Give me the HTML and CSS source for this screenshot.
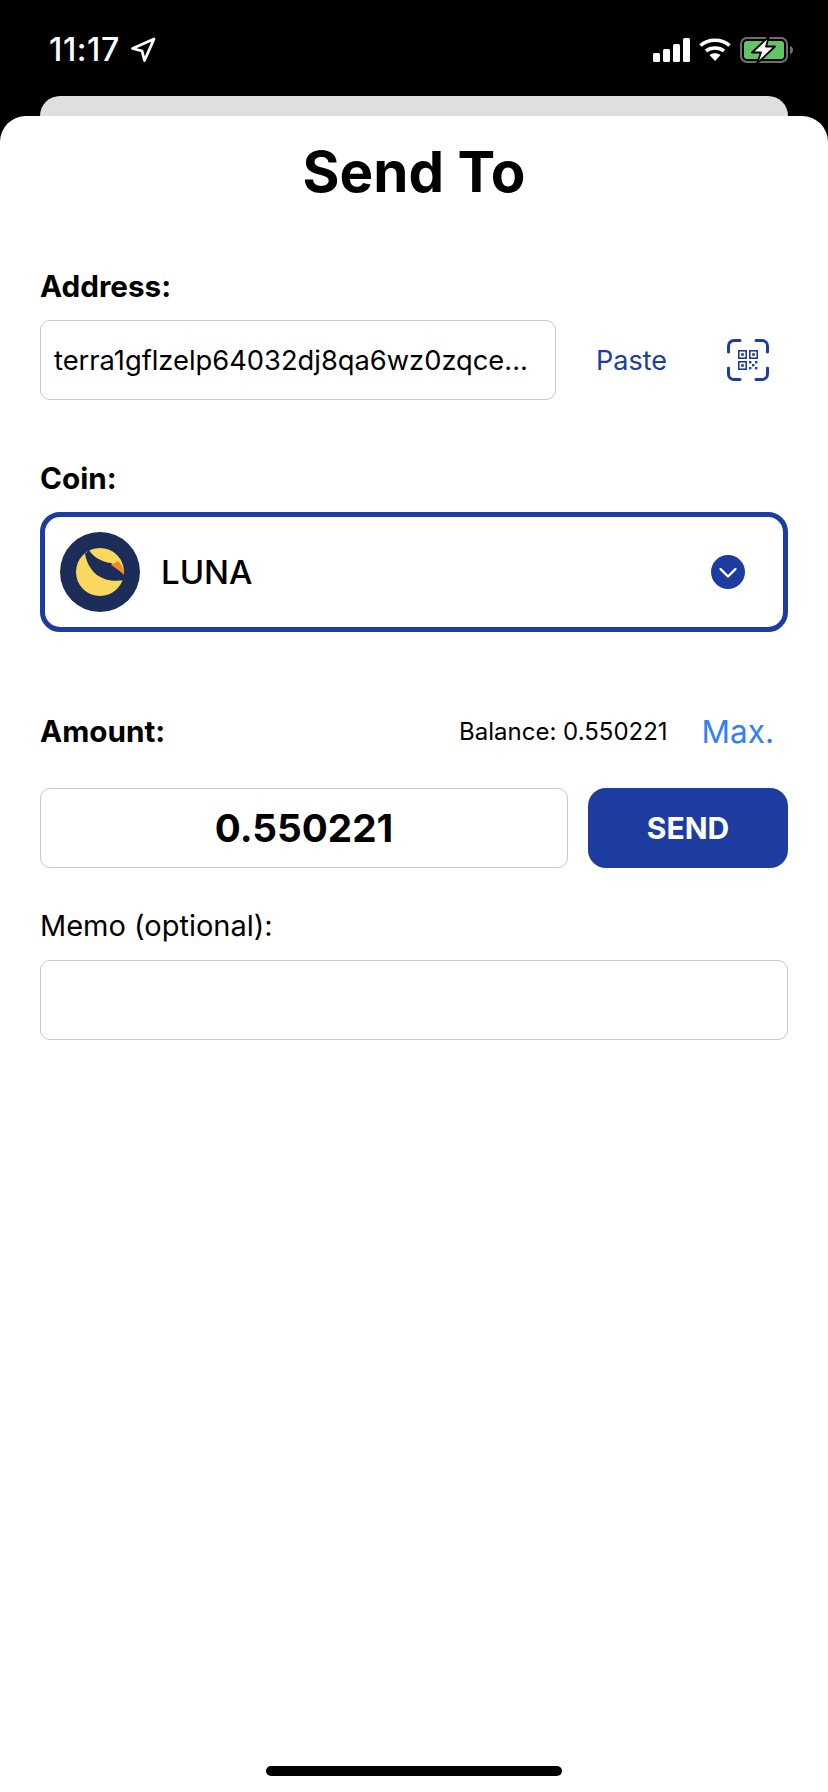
FILE: index.html
```html
<!DOCTYPE html>
<html>
<head>
  <title>Send To</title>
  <link rel="stylesheet" href="styles.css">
</head>
<body>
  <div class="status-bar">
    <div class="status-left">
      <span class="time">11:17</span>
      <svg class="location" width="26" height="26" viewBox="0 0 26 26">
        <path d="M24 2 L2.500 11.500 L12 14 L14.500 23.500 Z" fill="none" stroke="#fff" stroke-width="2.800" stroke-linejoin="round"/>
      </svg>
    </div>
    <div class="status-right">
      <svg width="37" height="24" viewBox="0 0 37 24">
        <rect x="0" y="15" width="7" height="9" rx="1.500" fill="#fff"/>
        <rect x="10" y="11" width="7" height="13" rx="1.500" fill="#fff"/>
        <rect x="20" y="6" width="7" height="18" rx="1.500" fill="#fff"/>
        <rect x="30" y="0" width="7" height="24" rx="1.500" fill="#fff"/>
      </svg>
      <svg width="32" height="24" viewBox="0 0 32 24">
        <path d="M1.500 7.500 C9 0.500 23 0.500 30.500 7.500" fill="none" stroke="#fff" stroke-width="3.600"/>
        <path d="M7 13 C11.500 9 20.500 9 25 13" fill="none" stroke="#fff" stroke-width="3.600"/>
        <path d="M10.500 17 C13.500 14.500 18.500 14.500 21.500 17 L16 23 Z" fill="#fff"/>
      </svg>
      <svg width="54" height="28" viewBox="0 0 54 28">
        <rect x="1" y="2" width="46" height="24" rx="6" fill="none" stroke="#6f6f6f" stroke-width="2"/>
        <rect x="4" y="5" width="40" height="18" rx="3" fill="#62c466"/>
        <path d="M50 10 C52 10.500 53 12 53 14 C53 16 52 17.500 50 18 Z" fill="#6f6f6f"/>
        <path d="M29 0.500 L12 16.500 H21 L17 27.500 L35 10.500 H26 Z" fill="#fff" stroke="#000" stroke-width="1.800" stroke-linejoin="round"/>
      </svg>
    </div>
  </div>

  <div class="back-card"></div>

  <div class="sheet">
    <h1 class="title">Send To</h1>

    <label class="label address-label">Address:</label>
    <div class="address-row">
      <div class="field address-field">terra1gflzelp64032dj8qa6wz0zqce...</div>
      <span class="paste">Paste</span>
      <svg class="qr" width="42" height="42" viewBox="0 0 42 42" fill="none">
        <g stroke="#1c3c9f" stroke-width="3" stroke-linecap="round">
          <path d="M13 1.500 H7 A5.500 5.500 0 0 0 1.500 7 V13"/>
          <path d="M29 1.500 H35 A5.500 5.500 0 0 1 40.500 7 V13"/>
          <path d="M13 40.500 H7 A5.500 5.500 0 0 1 1.500 35 V29"/>
          <path d="M29 40.500 H35 A5.500 5.500 0 0 0 40.500 35 V29"/>
        </g>
        <g stroke="#1c3c9f" stroke-width="1.600">
          <rect x="11.800" y="11.800" width="7.400" height="7.400"/>
          <rect x="22.800" y="11.800" width="7.400" height="7.400"/>
          <rect x="11.800" y="22.800" width="7.400" height="7.400"/>
        </g>
        <g fill="#1c3c9f">
          <rect x="14.200" y="14.200" width="2.600" height="2.600"/>
          <rect x="25.200" y="14.200" width="2.600" height="2.600"/>
          <rect x="14.200" y="25.200" width="2.600" height="2.600"/>
          <rect x="22" y="22" width="2.400" height="2.400"/>
          <rect x="28" y="22" width="2.400" height="2.400"/>
          <rect x="25" y="25" width="2.400" height="2.400"/>
          <rect x="22" y="28" width="2.400" height="2.400"/>
          <rect x="28" y="28" width="2.400" height="2.400"/>
        </g>
      </svg>
    </div>

    <label class="label coin-label">Coin:</label>
    <div class="coin-select">
      <svg class="coin-logo" width="80" height="80" viewBox="0 0 80 80">
        <circle cx="40" cy="40" r="40" fill="#1c2d5a"/>
        <circle cx="40" cy="40" r="24" fill="#f9d85e"/>
        <path d="M25 22 L29 18 C33 25 42 30 51 31 L65 42 L65 48 C48 51 30 46 25 22 Z" fill="#1c2d5a"/>
        <path d="M51 33 L58 29 C61 32 63 35 64 43 C61 40 56 36 51 33 Z" fill="#f08a24"/>
      </svg>
      <span class="coin-name">LUNA</span>
      <svg class="chevron" width="34" height="34" viewBox="0 0 34 34">
        <circle cx="17" cy="17" r="17" fill="#1c3c9f"/>
        <path d="M9.500 14 L17 21.500 L24.500 14" fill="none" stroke="#fff" stroke-width="2.400" stroke-linecap="round" stroke-linejoin="round"/>
      </svg>
    </div>

    <div class="amount-head">
      <label class="label">Amount:</label>
      <span class="balance">Balance: 0.550221</span>
      <span class="max">Max.</span>
    </div>
    <div class="amount-row">
      <div class="field amount-field">0.550221</div>
      <button class="send" type="button">SEND</button>
    </div>

    <label class="memo-label">Memo (optional):</label>
    <div class="field memo-field"></div>

    <div class="home-bar"></div>
  </div>
</body>
</html>
```

FILE: styles.css
```css
html, body {
  margin: 0;
  padding: 0;
}

body {
  width: 828px;
  height: 1792px;
  overflow: hidden;
  background-color: #000;
  font-family: Inter, "Liberation Sans", sans-serif;
  color: #000;
}

.status-bar {
  height: 96px;
  box-sizing: border-box;
  padding: 32px 34px 0 49px;
  display: flex;
  justify-content: space-between;
  align-items: flex-start;
  color: #fff;
}

.status-left {
  display: flex;
  align-items: center;
  gap: 10px;
}

.time {
  font-size: 32px;
  line-height: 36px;
  font-weight: 500;
  letter-spacing: 0.6px;
}

.status-right {
  display: flex;
  align-items: center;
  gap: 9px;
  padding-top: 4px;
}

.back-card {
  height: 40px;
  margin: 0 40px -20px;
  background-color: #dfdfdf;
  border-radius: 20px 20px 0 0;
}

.sheet {
  height: 1676px;
  box-sizing: border-box;
  padding: 20px 40px 0;
  background-color: #fff;
  border-radius: 26px 26px 0 0;
  display: flex;
  flex-direction: column;
}

.title {
  margin: 0;
  font-size: 56.500px;
  line-height: 72px;
  font-weight: 700;
  text-align: center;
}

.label {
  display: block;
  font-size: 29.700px;
  line-height: 36px;
  font-weight: 700;
}

.address-label {
  margin-top: 60px;
}

.field {
  height: 80px;
  box-sizing: border-box;
  border: 1px solid #c8c8c8;
  border-radius: 10px;
  background-color: #fff;
  display: flex;
  align-items: center;
}

.address-row {
  margin-top: 16px;
  display: flex;
  align-items: center;
}

.address-field {
  width: 516px;
  padding-left: 13px;
  font-size: 27.300px;
}

.paste {
  margin-left: 40px;
  font-size: 27px;
  color: #1c3c9f;
}

.qr {
  margin-left: 60px;
}

.coin-label {
  margin-top: 60px;
}

.coin-select {
  margin-top: 16px;
  height: 120px;
  box-sizing: border-box;
  border: 5px solid #1c3c9f;
  border-radius: 20px;
  padding: 0 38px 0 15px;
  display: flex;
  align-items: center;
}

.coin-name {
  margin-left: 21px;
  font-size: 33px;
  font-weight: 500;
}

.chevron {
  margin-left: auto;
}

.amount-head {
  margin-top: 81px;
  height: 36px;
  display: flex;
  align-items: center;
}

.balance {
  margin-left: auto;
  font-size: 24px;
}

.max {
  margin-left: 34px;
  margin-right: 14px;
  font-size: 31.500px;
  color: #3380f5;
}

.amount-row {
  margin-top: 39px;
  display: flex;
  gap: 20px;
}

.amount-field {
  width: 528px;
  justify-content: center;
  font-size: 38.700px;
  font-weight: 700;
}

.send {
  width: 200px;
  height: 80px;
  border: none;
  border-radius: 18px;
  background-color: #1c3c9f;
  color: #fff;
  font-family: inherit;
  font-size: 30px;
  font-weight: 700;
}

.memo-label {
  margin-top: 40px;
  font-size: 29px;
  line-height: 36px;
}

.memo-field {
  margin-top: 16px;
}

.home-bar {
  width: 296px;
  height: 10px;
  border-radius: 5px;
  background-color: #000;
  margin: auto auto 16px;
}
```
